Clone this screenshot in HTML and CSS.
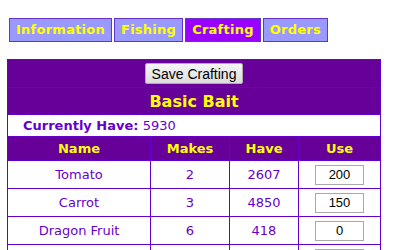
FILE: index.html
```html
<!DOCTYPE html>
<html>
<head>
<meta charset="utf-8">
<link rel="stylesheet" href="styles.css">
</head>
<body>
<nav class="tabs">
  <a class="tab">Information</a>
  <a class="tab">Fishing</a>
  <a class="tab active">Crafting</a>
  <a class="tab">Orders</a>
</nav>
<table class="craft">
  <colgroup>
    <col class="c-name"><col class="c-makes"><col class="c-have"><col class="c-use">
  </colgroup>
  <tr class="r-save"><td colspan="4"><button class="save">Save Crafting</button></td></tr>
  <tr class="r-title"><td colspan="4">Basic Bait</td></tr>
  <tr class="r-have"><td colspan="4"><b>Currently Have:</b> 5930</td></tr>
  <tr class="r-head"><th>Name</th><th>Makes</th><th>Have</th><th>Use</th></tr>
  <tr class="r-item"><td>Tomato</td><td>2</td><td>2607</td><td><input class="use" value="200"></td></tr>
  <tr class="r-item"><td>Carrot</td><td>3</td><td>4850</td><td><input class="use" value="150"></td></tr>
  <tr class="r-item"><td>Dragon Fruit</td><td>6</td><td>418</td><td><input class="use" value="0"></td></tr>
  <tr class="r-item"><td></td><td></td><td></td><td><input class="use" value=""></td></tr>
</table>
</body>
</html>
```
FILE: styles.css
```css
html, body {
  margin: 0;
  padding: 0;
  background: #ffffff;
  font-family: "DejaVu Sans", Verdana, sans-serif;
  overflow: hidden;
}

.tabs {
  display: flex;
  gap: 2px;
  margin: 18px 0 0 9px;
}

.tab {
  display: block;
  height: 22px;
  line-height: 22px;
  padding: 0 6px;
  border: 1px solid #6633cc;
  background: #9999ff;
  color: #ffff00;
  font-size: 13px;
  font-weight: bold;
  letter-spacing: 0.25px;
}

.tab.active {
  background: #9900ff;
}

.craft {
  margin: 17px 0 0 7px;
  width: 373px;
  border-collapse: collapse;
  table-layout: fixed;
  font-size: 13px;
}

.c-name { width: 143px; }
.c-makes { width: 79px; }
.c-have { width: 69px; }
.c-use { width: 82px; }

.craft td, .craft th {
  border: 1px solid #6600cc;
  padding: 0;
  text-align: center;
  color: #6600cc;
}

.r-save td {
  background: #660099;
  height: 27px;
}

.r-title td {
  background: #660099;
  color: #ffff00;
  font-size: 16px;
  font-weight: bold;
  height: 26px;
}

.r-have td {
  background: #ffffff;
  text-align: left;
  padding-left: 15px;
  height: 21px;
}

.r-head th {
  background: #660099;
  color: #ffff00;
  font-weight: bold;
  height: 23px;
}

.r-item td {
  background: #ffffff;
  height: 27px;
}

.save {
  font-family: "Liberation Sans", Arial, sans-serif;
  font-size: 14px;
  height: 21px;
  padding: 0 6px;
  border: 1px solid #adadad;
  border-radius: 2px;
  background: linear-gradient(#f6f6f6, #dcdcdc);
  color: #000000;
  vertical-align: middle;
}

.use {
  box-sizing: border-box;
  width: 49px;
  height: 20px;
  border: 1px solid #a9a9a9;
  font-family: "Liberation Sans", Arial, sans-serif;
  font-size: 13px;
  text-align: center;
  color: #000000;
  padding: 0;
  vertical-align: middle;
}
```
